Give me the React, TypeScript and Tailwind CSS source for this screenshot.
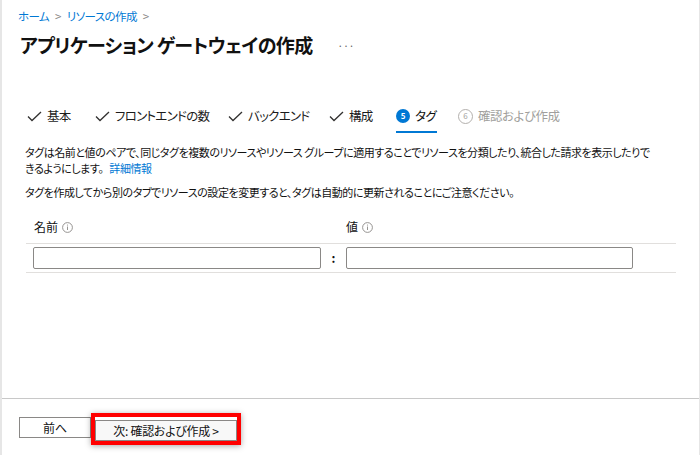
import React from "react";

const font = "font-['Noto_Sans_CJK_JP','Noto_Sans',sans-serif] [font-feature-settings:'palt']";

function Check() {
  return (
    <svg width="15" height="11" viewBox="0 0 15 11" className="shrink-0">
      <polyline points="1,5.5 5,9.5 14,1" fill="none" stroke="#323130" strokeWidth="1.3" />
    </svg>
  );
}

function Info() {
  return (
    <svg width="11" height="11" viewBox="0 0 11 11" className="shrink-0">
      <circle cx="5.5" cy="5.5" r="4.9" fill="none" stroke="#8a8886" strokeWidth="0.9" />
      <line x1="5.5" y1="4.5" x2="5.5" y2="8" stroke="#8a8886" strokeWidth="0.9" />
      <circle cx="5.5" cy="3" r="0.6" fill="#8a8886" />
    </svg>
  );
}

function DoneTab({ label, w }: { label: string; w: string }) {
  return (
    <div className={`${w} shrink-0 flex items-center gap-[5px] h-[20px] mb-[7px]`}>
      <Check />
      <span className="text-[12.5px] leading-[20px] tracking-[-0.75px] text-[#1b1b1b] whitespace-nowrap">{label}</span>
    </div>
  );
}

export default function App() {
  return (
    <div className={`${font} w-[700px] h-[455px] bg-white border-l-2 border-r border-[#e6e6e6] flex flex-col text-[#1b1b1b]`}>
      <div className="pl-[16px] pt-[8px]">
        <div className="flex items-center text-[11.5px] leading-[16px] tracking-[-0.6px] text-[#0078d4]">
          <span>ホーム</span>
          <span className="text-[#8a8886] mx-[6px]">&gt;</span>
          <span>リソースの作成</span>
          <span className="text-[#8a8886] mx-[6px]">&gt;</span>
        </div>
        <div className="flex items-center mt-[7px] h-[28px] pl-[2px]">
          <h1 className="text-[19px] leading-[28px] font-bold tracking-[-0.6px] text-[#111111] whitespace-nowrap">アプリケーション ゲートウェイの作成</h1>
          <span className="ml-[25px] text-[10px] text-[#605e5c]">···</span>
        </div>
      </div>

      <div className="flex items-end mt-[47px] pl-[25px] h-[27px]">
        <DoneTab label="基本" w="w-[68px]" />
        <DoneTab label="フロントエンドの数" w="w-[133px]" />
        <DoneTab label="バックエンド" w="w-[101px]" />
        <DoneTab label="構成" w="w-[67px]" />
        <div className="w-[62px] shrink-0 flex items-end h-[27px]">
          <div className="flex items-center gap-[5px] h-[27px] pb-[5px] border-b-2 border-[#0078d4] pr-[1px]">
            <span className="w-[14px] h-[14px] rounded-full bg-[#0078d4] text-white text-[8px] font-bold flex items-center justify-center leading-none">5</span>
            <span className="text-[12.5px] leading-[20px] tracking-[-0.5px] text-[#111111]">タグ</span>
          </div>
        </div>
        <div className="flex items-center gap-[5px] h-[20px] mb-[7px]">
          <span className="w-[15px] h-[15px] rounded-full border border-[#b3b0ad] text-[#a19f9d] text-[8px] flex items-center justify-center leading-none">6</span>
          <span className="text-[12.5px] leading-[20px] tracking-[-0.5px] text-[#a19f9d] whitespace-nowrap">確認および作成</span>
        </div>
      </div>

      <div className="pl-[23px] mt-[11px] text-[11px] leading-[16px] tracking-[-0.45px] text-[#111111]">
        <p className="whitespace-nowrap">タグは名前と値のペアで、同じタグを複数のリソースやリソース グループに適用することでリソースを分類したり、統合した請求を表示したりで</p>
        <p className="whitespace-nowrap">きるようにします。 <span className="text-[#0078d4] ml-[4px]">詳細情報</span></p>
        <p className="mt-[8px] whitespace-nowrap">タグを作成してから別のタブでリソースの設定を変更すると、タグは自動的に更新されることにご注意ください。</p>
      </div>

      <div className="ml-[24px] w-[650px] text-[12px]">
        <div className="flex pt-[19px] pb-[8px] border-b border-[#e1dfdd]">
          <div className="w-[320px] pl-[8px] flex items-center gap-[4px] leading-[16px] text-[#111111]">
            <span>名前</span>
            <Info />
          </div>
          <div className="flex items-center gap-[4px] leading-[16px] text-[#111111]">
            <span>値</span>
            <Info />
          </div>
        </div>
        <div className="flex items-center pl-[7px] pt-[3px] pb-[3px] border-b border-[#e1dfdd]">
          <div className="w-[288px] h-[22px] border border-[#8a8886] rounded-[2px]" />
          <div className="w-[25px] text-center leading-[22px] font-semibold text-[#111111]">:</div>
          <div className="w-[287px] h-[22px] border border-[#8a8886] rounded-[2px]" />
        </div>
      </div>

      <div className="flex-1" />

      <div className="h-[57px] border-t border-[#c8c8c8] pl-[17px] pt-[14px] flex items-start">
        <button className="mt-[4px] w-[72px] h-[21px] border border-[#8a8886] text-[12px] leading-[19px] text-[#111111] bg-white">前へ</button>
        <div className="border-4 border-[#ff0000] shadow-[0_1px_6px_rgba(0,0,0,0.35)]">
          <button className="w-[142px] h-[21px] border border-[#8a8886] text-[12px] leading-[19px] tracking-[-0.3px] text-[#111111] bg-[#f8f8f8]">次: 確認および作成 &gt;</button>
        </div>
      </div>
    </div>
  );
}
